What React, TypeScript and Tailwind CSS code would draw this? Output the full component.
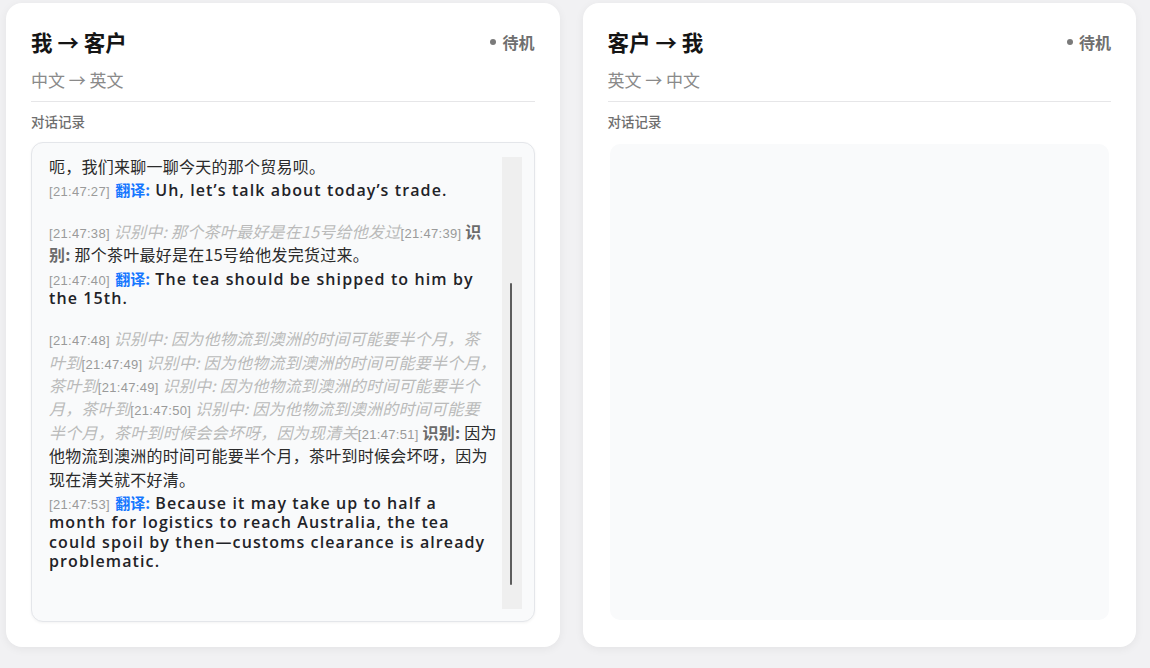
import React from "react";

type Seg = { time?: string; kind: "plain" | "interim" | "final"; label?: string; text: string };
type Entry = { rec: Seg[]; tr: { time: string; text: string } };

const CJK = "font-['Noto_Sans_CJK_SC',sans-serif]";

// line breaks follow the transcript as it is shown in the panel
const entries: Entry[] = [
	{
		rec: [{ kind: "plain", text: "呃，我们来聊一聊今天的那个贸易呗。" }],
		tr: { time: "21:47:27", text: "Uh, let’s talk about today’s trade." },
	},
	{
		rec: [
			{ time: "21:47:38", kind: "interim", text: "那个茶叶最好是在15号给他发过" },
			{ time: "21:47:39", kind: "final", label: "识\n别:", text: "那个茶叶最好是在15号给他发完货过来。" },
		],
		tr: { time: "21:47:40", text: "The tea should be shipped to him by\nthe 15th." },
	},
	{
		rec: [
			{ time: "21:47:48", kind: "interim", text: "因为他物流到澳洲的时间可能要半个月，茶\n叶到" },
			{ time: "21:47:49", kind: "interim", text: "因为他物流到澳洲的时间可能要半个月，\n茶叶到" },
			{ time: "21:47:49", kind: "interim", text: "因为他物流到澳洲的时间可能要半个\n月，茶叶到" },
			{
				time: "21:47:50",
				kind: "interim",
				text: "因为他物流到澳洲的时间可能要\n半个月，茶叶到时候会会坏呀，因为现清关",
			},
			{
				time: "21:47:51",
				kind: "final",
				text: "因为\n他物流到澳洲的时间可能要半个月，茶叶到时候会坏呀，因为\n现在清关就不好清。",
			},
		],
		tr: {
			time: "21:47:53",
			text: "Because it may take up to half a\nmonth for logistics to reach Australia, the tea\ncould spoil by then—customs clearance is already\nproblematic.",
		},
	},
];

function Stamp({ time }: { time: string }) {
	return (
		<span className="font-['Liberation_Sans',sans-serif] text-[13px] leading-none font-normal not-italic tracking-[0.3px] text-[#9a9a9a]">
			[{time}]
		</span>
	);
}

function LogEntry({ entry }: { entry: Entry }) {
	return (
		<div className="mb-[19px] whitespace-pre">
			<div className={`${CJK} text-[16px] leading-[23.4px] tracking-[0.25px] text-[#2b2b2b]`}>
				{entry.rec.map((seg, i) => {
					if (seg.kind === "plain") return <span key={i}>{seg.text}</span>;
					if (seg.kind === "interim")
						return (
							<span key={i}>
								<Stamp time={seg.time!} /> <span className="italic text-[#bababa]">识别中: {seg.text}</span>
							</span>
						);
					return (
						<span key={i}>
							<Stamp time={seg.time!} />{" "}
							<span className="font-bold text-[#6b6b6b]">{seg.label ?? "识别:"}</span> {seg.text}
						</span>
					);
				})}
			</div>
			<div className="mt-[3px] font-['Open_Sans',sans-serif] text-[16px] font-semibold leading-[19.3px] tracking-[1.1px] text-[#1f2328]">
				<Stamp time={entry.tr.time} />{" "}
				<span className={`${CJK} text-[15px] leading-none font-bold tracking-normal text-[#1677ff]`}>翻译:</span>{" "}
				{entry.tr.text}
			</div>
		</div>
	);
}

function Panel({
	title,
	langs,
	children,
}: {
	title: string;
	langs: string;
	children: React.ReactNode;
}) {
	return (
		<section className="rounded-[16px] bg-white px-[25px] pt-[24px] pb-[25px] shadow-[0_2px_10px_rgba(0,0,0,0.06)]">
			<div className="flex h-[30px] items-center justify-between">
				<h2 className={`${CJK} text-[21.5px] font-bold text-[#151515]`}>{title}</h2>
				<div className={`${CJK} flex items-center gap-[6px] text-[16px] font-bold text-[#6f6f6f]`}>
					<span className="h-[6px] w-[6px] rounded-full bg-[#7a7a7a]" />
					待机
				</div>
			</div>
			<div className="mt-[11px] border-b border-[#e6e6e8] pb-[9px]">
				<p className={`${CJK} text-[17px] leading-[24px] text-[#8a8a8a]`}>{langs}</p>
			</div>
			<p className={`${CJK} mt-[10px] text-[13.5px] font-medium leading-[18px] text-[#6e6e6e]`}>对话记录</p>
			<div className="mt-[12px]">{children}</div>
		</section>
	);
}

export default function App() {
	return (
		<div className="min-h-screen bg-[#f1f1f3] pt-[3px] pl-[6px]">
			<div className="grid w-[1130px] grid-cols-2 gap-[23px]">
				<Panel title="我 → 客户" langs="中文 → 英文">
					<div className="flex h-[480px] rounded-[12px] border border-[#e4e6ea] bg-[#f9fafb] pt-[12px] pr-[12px] pb-[13px] pl-[17px] shadow-[0_1px_3px_rgba(0,0,0,0.05)]">
						<div className="w-[452px] overflow-hidden">
							{entries.map((e, i) => (
								<LogEntry key={i} entry={e} />
							))}
						</div>
						<div className="mt-[2px] ml-[1px] h-[452px] w-[20px] bg-[#efefef]">
							<div className="mt-[126px] ml-[8px] h-[302px] w-[2px] rounded-full bg-[#5c5c5c]" />
						</div>
					</div>
				</Panel>
				<Panel title="客户 → 我" langs="英文 → 中文">
					<div className="h-[480px] rounded-[12px] border-2 border-white bg-[#f9fafb]" />
				</Panel>
			</div>
		</div>
	);
}
